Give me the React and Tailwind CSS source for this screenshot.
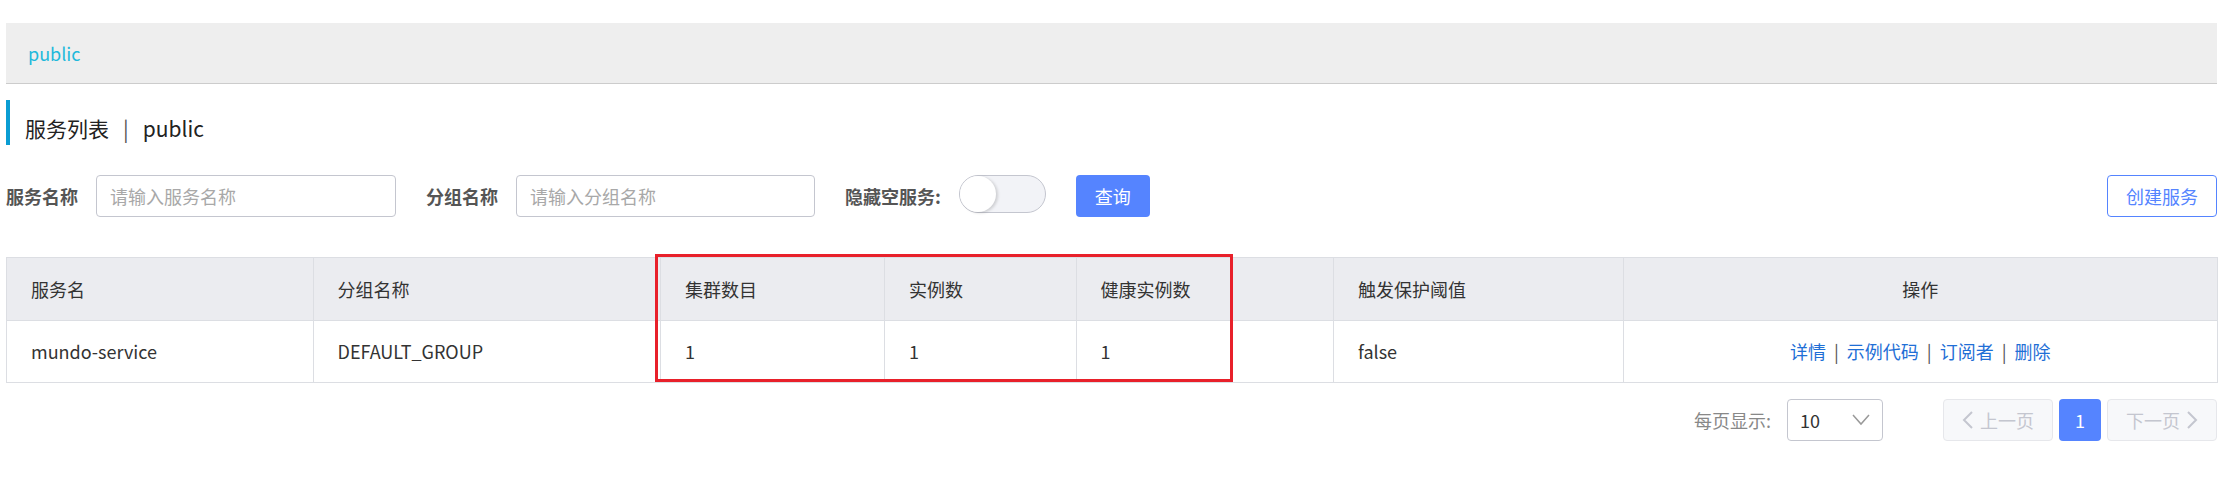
import React from "react";

const columns = [
  { key: "name", title: "服务名", width: "w-[306.5px]" },
  { key: "group", title: "分组名称", width: "w-[347.5px]" },
  { key: "clusters", title: "集群数目", width: "w-[224px]" },
  { key: "instances", title: "实例数", width: "w-[191.5px]" },
  { key: "healthy", title: "健康实例数", width: "w-[257.5px]" },
  { key: "threshold", title: "触发保护阈值", width: "w-[290px]" },
  { key: "ops", title: "操作", width: "w-[593.5px]" },
];

const rows = [
  {
    name: "mundo-service",
    group: "DEFAULT_GROUP",
    clusters: "1",
    instances: "1",
    healthy: "1",
    threshold: "false",
  },
];

const ops = ["详情", "示例代码", "订阅者", "删除"];

const Chevron = ({ dir }) => (
  <svg width="12" height="20" viewBox="0 0 12 20" fill="none" className="shrink-0">
    <polyline
      points={dir === "left" ? "10,2 2,10 10,18" : "2,2 10,10 2,18"}
      stroke="#c4c6cf"
      strokeWidth="2"
    />
  </svg>
);

const App = () => {
  return (
    <div className="min-h-[501px] bg-white pl-[6px] pr-[12px] pt-[23px] font-[family-name:'Noto_Sans_CJK_SC','Noto_Sans',sans-serif] text-[#333]">
      {/* Breadcrumb header */}
      <div className="h-[61px] bg-[#eeeeee] border-b border-[#cccccc] flex items-center pl-[22px]">
        <span className="text-[18px] text-[#1fb9db] leading-none">public</span>
      </div>

      {/* Title */}
      <div className="mt-[16px] h-[45px] border-l-4 border-[#0a9dd3] flex items-end pb-[2px] pl-[15px] text-[21px] leading-[30px] text-[#222]">
        <span>服务列表</span>
        <span className="mx-[14px] text-[#555]">|</span>
        <span>public</span>
      </div>

      {/* Search form */}
      <div className="mt-[30px] h-[42px] flex items-center">
        <span className="text-[18px] font-bold text-[#555] mr-[18px]">服务名称</span>
        <div className="w-[300px] h-[42px] border border-[#c4c6cf] rounded-[4px] flex items-center px-[13px] text-[18px] text-[#a8a8a8]">
          请输入服务名称
        </div>
        <span className="ml-[30px] text-[18px] font-bold text-[#555] mr-[18px]">分组名称</span>
        <div className="w-[299px] h-[42px] border border-[#c4c6cf] rounded-[4px] flex items-center px-[13px] text-[18px] text-[#a8a8a8]">
          请输入分组名称
        </div>
        <span className="ml-[30px] text-[18px] font-bold text-[#555] mr-[18px]">隐藏空服务:</span>
        <div className="w-[87px] h-[38px] rounded-full bg-[#f2f3f7] border border-[#c4c6cf] flex items-center self-start">
          <div className="w-[36px] h-[36px] rounded-full bg-white shadow-[2px_1px_3px_rgba(0,0,0,0.15)]" />
        </div>
        <button className="ml-[30px] w-[74px] h-[42px] rounded-[4px] bg-[#5584ff] text-white text-[18px]">
          查询
        </button>
        <button className="ml-auto w-[110px] h-[42px] rounded-[4px] border border-[#5584ff] text-[#5584ff] text-[18px] bg-white">
          创建服务
        </button>
      </div>

      {/* Table */}
      <div className="relative mt-[40px] w-[2210.5px]">
        <table className="table-fixed border-collapse w-[2210.5px] text-[18px] text-[#333]">
          <colgroup>
            {columns.map((c) => (
              <col key={c.key} className={c.width} />
            ))}
          </colgroup>
          <thead>
            <tr className="h-[63px] bg-[#ebecf0]">
              {columns.map((c) => (
                <th
                  key={c.key}
                  className={`border border-[#dcdee3] font-normal px-[24px] ${
                    c.key === "ops" ? "text-center" : "text-left"
                  }`}
                >
                  {c.title}
                </th>
              ))}
            </tr>
          </thead>
          <tbody>
            {rows.map((r) => (
              <tr key={r.name} className="h-[62px]">
                {columns.slice(0, 6).map((c) => (
                  <td key={c.key} className="border border-[#dcdee3] px-[24px] text-left">
                    {r[c.key]}
                  </td>
                ))}
                <td className="border border-[#dcdee3] px-[24px] text-center">
                  {ops.map((op, i) => (
                    <React.Fragment key={op}>
                      {i > 0 && <span className="text-[#555] mx-[8px]">|</span>}
                      <span className="text-[#1f6fd6]">{op}</span>
                    </React.Fragment>
                  ))}
                </td>
              </tr>
            ))}
          </tbody>
        </table>
        {/* Annotation highlight */}
        <div className="absolute left-[648.5px] top-[-3px] w-[578px] h-[128px] border-[3px] border-[#e8202a] pointer-events-none" />
      </div>

      {/* Pagination */}
      <div className="mt-[16px] h-[42px] flex items-center justify-end">
        <span className="text-[18px] text-[#888] mr-[16px]">每页显示:</span>
        <div className="w-[96px] h-[42px] border border-[#c4c6cf] rounded-[4px] flex items-center justify-between pl-[12px] pr-[12px] text-[18px] text-[#333]">
          <span>10</span>
          <svg width="18" height="12" viewBox="0 0 18 12" fill="none">
            <polyline points="1,1 9,10 17,1" stroke="#999" strokeWidth="1.5" />
          </svg>
        </div>
        <div className="ml-[60px] w-[110px] h-[42px] rounded-[4px] border border-[#e6e7eb] bg-[#f7f8fa] flex items-center justify-center gap-[6px] text-[18px] text-[#c4c6cf]">
          <Chevron dir="left" />
          <span>上一页</span>
        </div>
        <div className="ml-[6px] w-[42px] h-[42px] rounded-[4px] bg-[#5584ff] flex items-center justify-center text-[18px] text-white">
          1
        </div>
        <div className="ml-[6px] w-[110px] h-[42px] rounded-[4px] border border-[#e6e7eb] bg-[#f7f8fa] flex items-center justify-center gap-[6px] text-[18px] text-[#c4c6cf]">
          <span>下一页</span>
          <Chevron dir="right" />
        </div>
      </div>
    </div>
  );
};

export default App;
